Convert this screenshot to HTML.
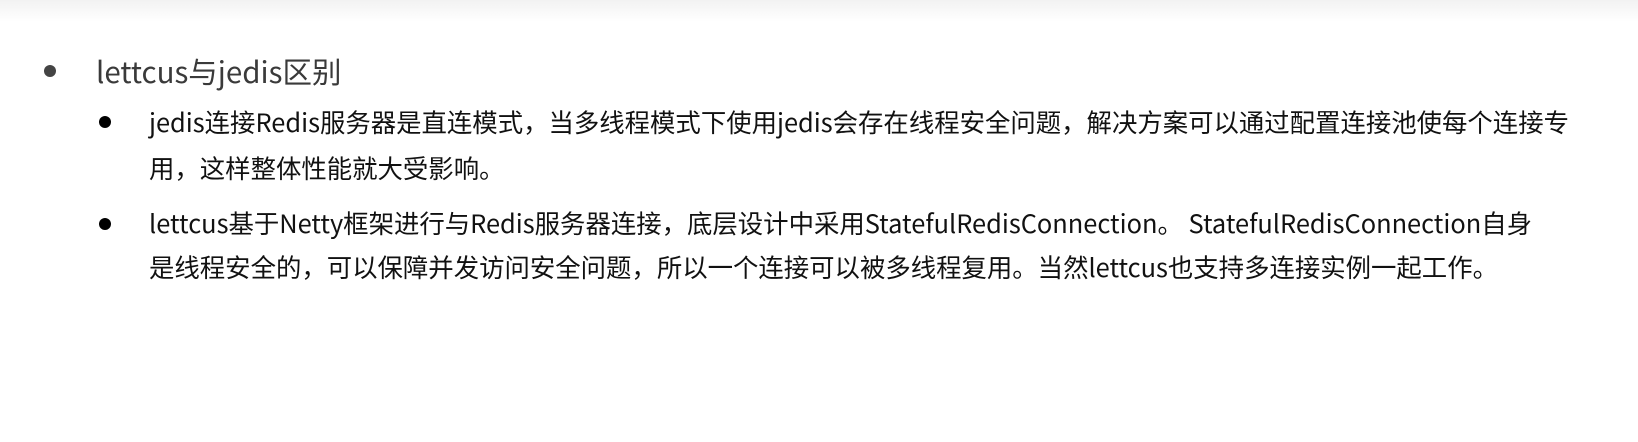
<!DOCTYPE html>
<html><head><meta charset="utf-8"><style>
body{margin:0;width:1638px;height:442px;background:#fff;overflow:hidden;font-family:"Noto Sans CJK SC","Liberation Sans",sans-serif;position:relative}
.top{position:absolute;left:0;top:0;width:1638px;height:22px;background:linear-gradient(#f2f2f2,#fff)}
.t{position:absolute;white-space:nowrap}
.h{left:96px;top:53px;font-size:29.5px;line-height:36px;color:#3a3a3a}
.s{left:149px;font-size:25.4px;line-height:30px;color:#111}
.b{position:absolute;border-radius:50%}
</style></head><body>
<div class="top"></div>
<div class="b" style="left:44px;top:65px;width:12px;height:12px;background:#444"></div>
<div class="t h">lettcus与jedis区别</div>
<div class="b" style="left:99px;top:116px;width:12px;height:12px;background:#000"></div>
<div class="t s" style="top:107px">jedis连接Redis服务器是直连模式，当多线程模式下使用jedis会存在线程安全问题，解决方案可以通过配置连接池使每个连接专</div>
<div class="t s" style="top:153px">用，这样整体性能就大受影响。</div>
<div class="b" style="left:99px;top:218px;width:12px;height:12px;background:#000"></div>
<div class="t s" style="top:208px">lettcus基于Netty框架进行与Redis服务器连接，底层设计中采用StatefulRedisConnection。 StatefulRedisConnection自身</div>
<div class="t s" style="top:252px">是线程安全的，可以保障并发访问安全问题，所以一个连接可以被多线程复用。当然lettcus也支持多连接实例一起工作。</div>
</body></html>
